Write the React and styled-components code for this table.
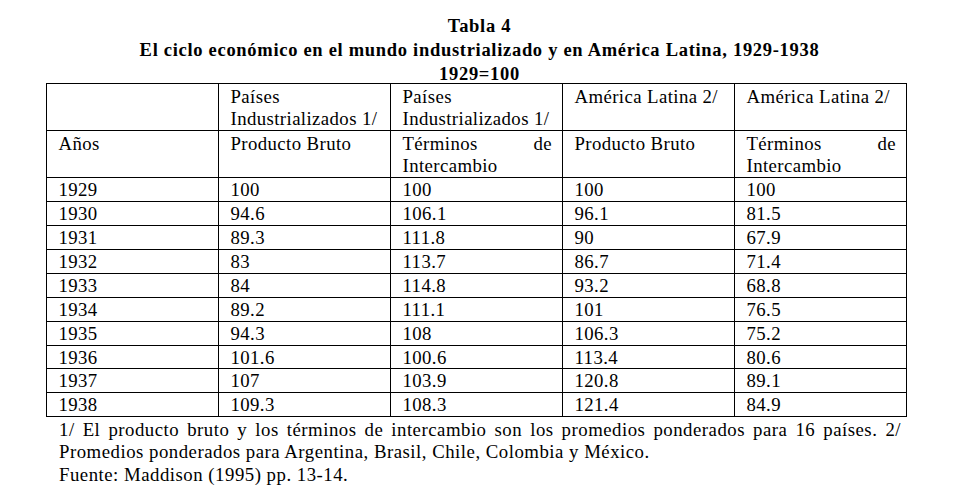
import { createGlobalStyle, styled } from "styled-components";

const serif = `"Liberation Serif", "Times New Roman", serif`;

const GlobalStyle = createGlobalStyle`
  body {
    margin: 0;
    background: #fff;
    color: #000;
    font-family: ${serif};
  }
`;

const Page = styled.div`
  width: 959px;
  height: 501px;
  overflow: hidden;
  background: #fff;
  font-family: ${serif};
  color: #000;
`;

const Title = styled.div`
  padding-top: 15px;
  margin-bottom: -3.5px;
  text-align: center;
  font-family: ${serif};
  font-weight: bold;
  font-size: 18.5px;
  letter-spacing: 0.7px;
  line-height: 23.85px;
`;

const Table = styled.table`
  margin-left: 46px;
  width: 860px;
  border-collapse: collapse;
  table-layout: fixed;
  font-family: ${serif};
  font-size: 18.8px;
  letter-spacing: 0.4px;
  color: #000;
`;

const Col = styled.col`
  width: 172px;
`;

const Row = styled.tr`
  height: ${(props) => props.h}px;
`;

const Cell = styled.td`
  border: 1px solid #000;
  padding: ${(props) => (props.head ? "1.5px" : "2px")} 10px 0 11.5px;
  line-height: ${(props) => (props.head ? "22.3px" : "20.9px")};
  vertical-align: top;
  white-space: nowrap;
  font-family: ${serif};
`;

const Split = styled.span`
  display: flex;
  justify-content: space-between;
`;

const Notes = styled.div`
  margin-left: 59px;
  width: 842px;
  font-family: ${serif};
  font-size: 18.8px;
  letter-spacing: 0.5px;
  line-height: 22.6px;
  padding-top: 1.5px;
`;

const Para = styled.p`
  margin: 0;
  font-family: ${serif};
  text-align: ${(props) => (props.justify ? "justify" : "left")};
`;

const rows = [
  ["1929", "100", "100", "100", "100"],
  ["1930", "94.6", "106.1", "96.1", "81.5"],
  ["1931", "89.3", "111.8", "90", "67.9"],
  ["1932", "83", "113.7", "86.7", "71.4"],
  ["1933", "84", "114.8", "93.2", "68.8"],
  ["1934", "89.2", "111.1", "101", "76.5"],
  ["1935", "94.3", "108", "106.3", "75.2"],
  ["1936", "101.6", "100.6", "113.4", "80.6"],
  ["1937", "107", "103.9", "120.8", "89.1"],
  ["1938", "109.3", "108.3", "121.4", "84.9"],
];

export default function App() {
  return (
    <Page>
      <GlobalStyle />
      <Title>
        Tabla 4
        <br />
        El ciclo económico en el mundo industrializado y en América Latina, 1929-1938
        <br />
        1929=100
      </Title>
      <Table>
        <colgroup>
          <Col />
          <Col />
          <Col />
          <Col />
          <Col />
        </colgroup>
        <tbody>
          <Row h={47}>
            <Cell head />
            <Cell head>
              Países
              <br />
              Industrializados 1/
            </Cell>
            <Cell head>
              Países
              <br />
              Industrializados 1/
            </Cell>
            <Cell head>América Latina 2/</Cell>
            <Cell head>América Latina 2/</Cell>
          </Row>
          <Row h={46}>
            <Cell head>Años</Cell>
            <Cell head>Producto Bruto</Cell>
            <Cell head>
              <Split>
                <span>Términos</span>
                <span>de</span>
              </Split>
              Intercambio
            </Cell>
            <Cell head>Producto Bruto</Cell>
            <Cell head>
              <Split>
                <span>Términos</span>
                <span>de</span>
              </Split>
              Intercambio
            </Cell>
          </Row>
          {rows.map((r) => (
            <Row key={r[0]} h={23.87}>
              {r.map((v, i) => (
                <Cell key={i}>{v}</Cell>
              ))}
            </Row>
          ))}
        </tbody>
      </Table>
      <Notes>
        <Para justify>
          1/ El producto bruto y los términos de intercambio son los promedios
          ponderados para 16 países. 2/ Promedios ponderados para Argentina,
          Brasil, Chile, Colombia y México.
        </Para>
        <Para>Fuente: Maddison (1995) pp. 13-14.</Para>
      </Notes>
    </Page>
  );
}
